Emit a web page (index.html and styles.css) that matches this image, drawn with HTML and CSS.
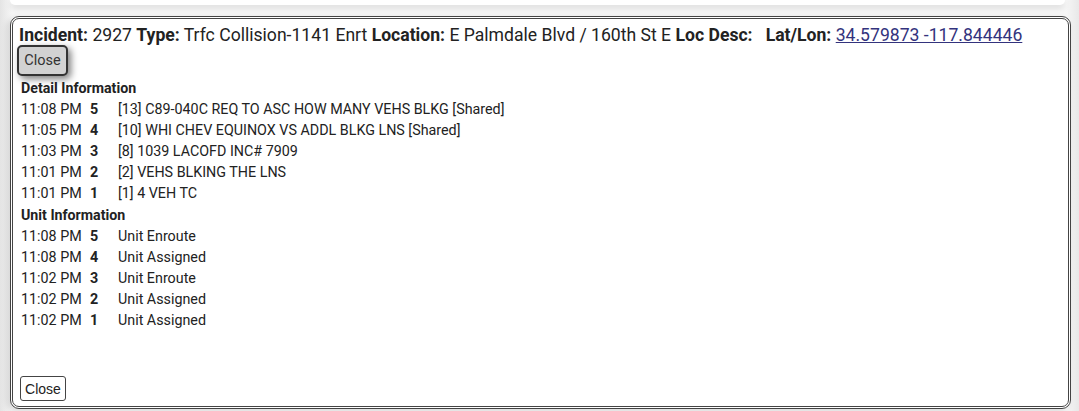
FILE: index.html
```html
<!DOCTYPE html>
<html>
<head>
<meta charset="utf-8">
<link rel="stylesheet" href="styles.css">
</head>
<body>
<div class="backcard"></div>
<div class="dialog">
  <div class="header">
    <b>Incident:</b> 2927 <b>Type:</b> Trfc Collision-1141 Enrt <b>Location:</b> E Palmdale Blvd / 160th St E <b>Loc Desc:</b>&nbsp;&nbsp; <b>Lat/Lon:</b> <a href="#" class="latlon">34.579873 -117.844446</a>
  </div>
  <div class="toprow"><button class="btn-top">Close</button></div>
  <div class="section-title">Detail Information</div>
  <table class="log">
    <tr><td class="t">11:08 PM</td><td class="n">5</td><td>[13] C89-040C REQ TO ASC HOW MANY VEHS BLKG [Shared]</td></tr>
    <tr><td class="t">11:05 PM</td><td class="n">4</td><td>[10] WHI CHEV EQUINOX VS ADDL BLKG LNS [Shared]</td></tr>
    <tr><td class="t">11:03 PM</td><td class="n">3</td><td>[8] 1039 LACOFD INC# 7909</td></tr>
    <tr><td class="t">11:01 PM</td><td class="n">2</td><td>[2] VEHS BLKING THE LNS</td></tr>
    <tr><td class="t">11:01 PM</td><td class="n">1</td><td>[1] 4 VEH TC</td></tr>
  </table>
  <div class="section-title">Unit Information</div>
  <table class="log">
    <tr><td class="t">11:08 PM</td><td class="n">5</td><td>Unit Enroute</td></tr>
    <tr><td class="t">11:08 PM</td><td class="n">4</td><td>Unit Assigned</td></tr>
    <tr><td class="t">11:02 PM</td><td class="n">3</td><td>Unit Enroute</td></tr>
    <tr><td class="t">11:02 PM</td><td class="n">2</td><td>Unit Assigned</td></tr>
    <tr><td class="t">11:02 PM</td><td class="n">1</td><td>Unit Assigned</td></tr>
  </table>
  <div class="footer"><button class="btn-bottom">Close</button></div>
</div>
</body>
</html>
```

FILE: styles.css
```css
html, body {
  margin: 0;
  padding: 0;
}
body {
  width: 1079px;
  height: 411px;
  overflow: hidden;
  background: linear-gradient(to right, #e4e4e4 0px, #f6f6f6 12px, #f6f6f6 1066px, #e8e8e8 1079px);
  font-family: Roboto, "Liberation Sans", Arial, sans-serif;
  color: #222;
}
.backcard {
  height: 5px;
  margin: 0 14px 0 10px;
  background: #fff;
  box-shadow: 0 3px 6px rgba(0,0,0,0.12);
  border-radius: 0 0 8px 8px;
}
.dialog {
  box-sizing: border-box;
  margin: 11px 0 0 10px;
  width: 1061px;
  height: 393px;
  border: 3px double #444;
  border-radius: 9px;
  background: #fff;
  box-shadow: -3px 2px 6px rgba(0,0,0,0.12);
  padding: 6px 6px 5px 6px;
  display: flex;
  flex-direction: column;
}
.header {
  font-size: 17.6px;
  line-height: 20px;
  color: #222;
  white-space: nowrap;
}
.header b {
  font-weight: 700;
}
.latlon {
  color: #33337d;
  text-decoration: underline;
}
.toprow {
  margin-bottom: 1px;
}
.btn-top {
  font-family: Roboto, "Liberation Sans", sans-serif;
  font-size: 14.5px;
  color: #333;
  background: #d2d2d2;
  border: 2px solid #333;
  border-radius: 5px;
  width: 51px;
  height: 31px;
  padding: 0;
  margin-left: -2px;
  box-shadow: 3px 3px 7px rgba(0,0,0,0.5);
}
.section-title {
  font-size: 14.2px;
  font-weight: 700;
  line-height: 22px;
  padding-left: 2px;
  color: #222;
}
.log {
  border-collapse: collapse;
  font-size: 14.3px;
  color: #222;
  margin-left: 2px;
}
.log td {
  padding: 0;
  height: 21px;
  line-height: 21px;
  white-space: nowrap;
}
.log td.t {
  width: 69px;
}
.log td.n {
  width: 28px;
  font-weight: 700;
}
.footer {
  margin-top: auto;
}
.btn-bottom {
  font-family: "Liberation Sans", Arial, sans-serif;
  font-size: 14px;
  color: #222;
  background: #fff;
  border: 1px solid #444;
  border-radius: 3px;
  height: 25px;
  width: 46px;
  padding: 0;
  margin-left: 1px;
}
```
